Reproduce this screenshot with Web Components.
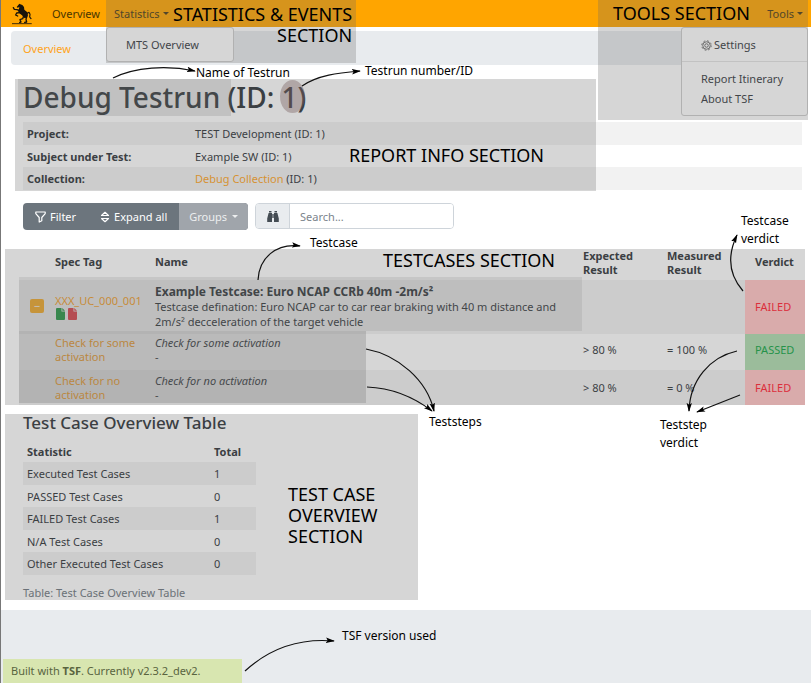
<!DOCTYPE html>
<html lang="en">
<head>
<meta charset="utf-8">
<title>Testrun report</title>
<style>
body{margin:0;background:#fff;color:#2b3035;font:11px/15px "Noto Sans","Open Sans",sans-serif}
</style>
</head>
<body>
<report-page></report-page>
<script>
const base = `*{box-sizing:border-box}
a{color:#ffa31a;text-decoration:none}
button{font:inherit;border:0;background:none;padding:0;color:inherit}
table{border-collapse:collapse;width:100%}
td,th{padding:0 4px;text-align:left}
.shade{position:absolute;background:rgba(104,104,104,.27);pointer-events:none}
.caret{display:inline-block;border:3px solid transparent;border-top:3px solid;border-bottom:0;margin-left:3px;vertical-align:3px}`;

function define(name, css, html) {
  const t = document.createElement('template');
  t.innerHTML = `<style>${base}${css}</style>${html}`;
  customElements.define(name, class extends HTMLElement {
    constructor() {
      super();
      this.attachShadow({mode: 'open'}).append(t.content.cloneNode(true));
    }
  });
}

define('nav-menu', `
:host{display:block;position:relative}
.menu{position:absolute;top:100%;left:0;background:#fff;border:1px solid #ccc;border-radius:3px;white-space:nowrap;z-index:2}
:host([side=end]) .menu{left:auto;right:0}
button{height:27px;padding:0 8px;color:#4a3a14;display:block}
:host([side=end]) button{padding-right:5px}
`, `<button aria-haspopup="true" aria-expanded="true"><slot name="label"></slot><span class="caret"></span></button><div class="menu"><slot></slot></div>`);

define('top-nav', `
:host{display:block;position:relative;z-index:3}
nav{display:flex;align-items:center;height:27px;background:#ffa500;padding:0 3px 0 11px}
.logo{display:block;width:20px;height:22px}
.home{color:#4a3500;margin:0 6px 0 20px}
nav-menu:last-of-type{margin-left:auto}
.item{display:block;color:#33383d;line-height:20px;padding:0 24px 0 19px}
.wide{padding-right:34px}
.pad{padding:7px 0 6px}
.line{border-top:1px solid #e4e4e4}
.gear{vertical-align:-2px;margin-right:2px}
.stat{left:105px;top:0;width:250px;height:63px;z-index:3}
.tool{right:3px;top:0;width:210px;height:120px;z-index:3}
`, `<nav>
<svg class="logo" viewBox="35 6 60 64" role="img" aria-label="Horse" fill="none" stroke="#17130a" stroke-linejoin="round" stroke-linecap="round"><path fill="#17130a" stroke="none" d="M57 7l3 2 6 2 5 6 1 8 9 8 2 9-3 7-8 1-7-8-8-6-4-7 3-7 1-5-5 2-3-2z"/><path stroke-width="4" d="M58 28l-8-3-8-1-3-5M59 34l-10 1-3 6 6 3M70 44l-3 8-8 3 3 7-4 1M79 46l-2 8 2 8-6 1"/><path stroke-width="3.500" d="M81 36l5-3 3 6-1 8 4 5"/><path stroke-width="2.500" d="M36 67h57"/></svg>
<a class="home" href="#">Overview</a>
<nav-menu><span slot="label">Statistics</span><div class="pad"><a class="item wide" href="#mts">MTS Overview</a></div></nav-menu>
<nav-menu side="end"><span slot="label">Tools</span><div class="pad"><a class="item" href="#settings"><svg class="gear" width="11" height="11" viewBox="0 0 22 22" fill="none" stroke="#444" stroke-width="1.5"><circle cx="11" cy="11" r="7.500"/><circle cx="11" cy="11" r="3.500"/><circle cx="11" cy="11" r="9.500" stroke-dasharray="3.730 3.730"/></svg>Settings</a></div><div class="pad line"><a class="item" href="#itinerary">Report Itinerary</a><a class="item" href="#about">About TSF</a></div></nav-menu>
</nav><div class="shade stat"></div><div class="shade tool"></div>`);

define('bread-crumb', `
:host{display:flex;align-items:center;height:34px;margin:4px 3px 0 10px;padding:0 12px;border-radius:4px;background:#e8ebee}
`, `<slot></slot>`);

define('report-info', `
:host{display:block;position:relative;margin:14px 9px 0 14px;padding:0 0 1px 8px}
h1{margin:0;font-size:28px;font-weight:500;line-height:36px;height:43px}
th{width:168px}
tr{height:23px}tr:nth-child(even){height:22px}
tr:nth-child(odd){background:#f2f2f2}
.all{inset:0 auto 0 0;width:581px}
.name{left:3px;top:0;width:213px;height:37px;background:rgba(104,104,104,.19)}
.id{left:265px;top:1px;width:25px;height:33px;border-radius:50%;background:rgba(120,95,95,.4)}
`, `<h1>Debug Testrun (ID: 1)</h1>
<table><tr><th scope="row">Project:</th><td>TEST Development (ID: 1)</td></tr>
<tr><th scope="row">Subject under Test:</th><td>Example SW (ID: 1)</td></tr>
<tr><th scope="row">Collection:</th><td><a href="#collection">Debug Collection</a> (ID: 1)</td></tr></table>
<div class="shade all"></div><div class="shade name"></div><div class="shade id"></div>`);

define('tool-bar', `
:host{display:flex;gap:7px;margin:12px 22px 0;height:27px}
.group{display:flex;border-radius:4px;overflow:hidden;background:#6c757d;color:#fff}
.group button{display:flex;align-items:center;gap:4px;padding:0 12px}
.group .off{background:#a0a5ab;color:#eceeef;padding:0 10px;gap:0}
.off .caret{margin-left:5px}
.search{display:flex;border:1px solid #ced4da;border-radius:4px;overflow:hidden;height:26px;width:199px}
label{display:grid;place-items:center;width:34px;background:#e9ecef;border-right:1px solid #ced4da}
input{flex:1;min-width:0;border:0;padding:0 10px;font:inherit;outline:0}
input::placeholder{color:#7b848c;opacity:1}
`, `<div class="group"><button><svg width="11" height="12" viewBox="0 0 11 12" fill="none" stroke="#fff" stroke-width="1.200" stroke-linejoin="round"><path d="M.8 1h9.400v1.600L6.800 6.500v3.200L4.200 11V6.500L.8 2.600z"/></svg>Filter</button>
<button><svg width="10" height="12" viewBox="0 0 10 12" fill="none" stroke="#fff" stroke-width="1.200" stroke-linejoin="round"><path d="M1.500 4.500L5 1.300l3.500 3.200zM1.500 7.500L5 10.700l3.500-3.200z"/></svg>Expand all</button>
<button class="off">Groups<span class="caret"></span></button></div>
<div class="search"><label for="q"><svg width="12" height="11" viewBox="0 0 12 11" fill="#444c53" role="img" aria-label="Search"><path d="M2 0h2.500v1.500H2zM7.500 0H10v1.500H7.500zM1.600 2H5v9H.2V7.500zM7 2h3.400L11.800 7.500V11H7zM5.300 3h1.400v4H5.300z"/></svg></label><input id="q" type="text" placeholder="Search..."></div>`);

const doc = c => `<svg width="9" height="12" viewBox="0 0 9 12"><path fill="${c}" d="M1 0h4.500v3.500H9V11a1 1 0 0 1-1 1H1a1 1 0 0 1-1-1V1a1 1 0 0 1 1-1z"/><path fill="${c}" d="M6.300 0L9 2.700H6.300z"/></svg>`;
define('test-cases', `
:host{display:block;position:relative;margin:19px 6px 0 4px;padding-left:14px}
table{table-layout:fixed}
.c0{width:32px}.c1{width:100px}.c3{width:84px}.c4{width:82px}.c5{width:60px}
thead tr{height:31px}
th{line-height:14px;padding-bottom:5px}
th.two-line{padding-bottom:0;vertical-align:top}
td{line-height:15px}
tbody tr:nth-child(odd){background:#f2f2f2}
.case{height:54px}.step{height:36px}.step+.step{height:35px}
.step td{line-height:14px}
.first td{padding-bottom:4px}
.step td:nth-child(2){padding-right:12px}
b{font-size:12px}
.v{position:relative;z-index:2;background:#d9abab;color:#dc2f3c;padding-left:10px}
thead th:last-child{padding-left:10px}
.v.ok{background:#9bbc9b;color:#25934a}
.case td:first-child{padding-left:11px}
.case td{padding-bottom:2px}
.fold{display:block;width:14px;height:14px;border-radius:2px;background:#ffae20;color:#fff;line-height:12px;text-align:center}
.docs{display:flex;gap:3px;padding-left:1px}
.case a{display:block}
.all{inset:0}
.one{left:14px;top:28px;right:223px;height:54px;background:rgba(104,104,104,.14)}
.two{left:14px;top:82px;width:347px;height:72px;background:rgba(104,104,104,.25)}
`, `<table><colgroup><col class="c0"><col class="c1"><col><col class="c3"><col class="c4"><col class="c5"></colgroup>
<thead><tr><th></th><th>Spec Tag</th><th>Name</th><th class="two-line">Expected Result</th><th class="two-line">Measured Result</th><th>Verdict</th></tr></thead>
<tbody><tr class="case"><td><button class="fold" aria-label="Collapse">−</button></td><td><a href="#uc">XXX_UC_000_001</a><div class="docs">${doc('#1f9a3f')}${doc('#e43c46')}</div></td><td><b>Example Testcase: Euro NCAP CCRb 40m -2m/s²</b><br>Testcase defination: Euro NCAP car to car rear braking with 40 m distance and 2m/s² decceleration of the target vehicle</td><td></td><td></td><td class="v">FAILED</td></tr>
<tr class="step first"><td></td><td><a href="#s1">Check for some activation</a></td><td><i>Check for some activation</i><br>-</td><td>&gt; 80 %</td><td>= 100 %</td><td class="v ok">PASSED</td></tr>
<tr class="step"><td></td><td><a href="#s2">Check for no activation</a></td><td><i>Check for no activation</i><br>-</td><td>&gt; 80 %</td><td>= 0 %</td><td class="v">FAILED</td></tr></tbody></table>
<div class="shade all"></div><div class="shade one"></div><div class="shade two"></div>`);

define('case-overview', `
:host{display:block;position:relative;margin:9px 4px 0;padding:0 18px;height:186px}
h2{margin:0;font-size:17px;font-weight:500;line-height:18px;padding-bottom:8px}
table{width:233px}
tr{height:23px}thead tr{height:22px}tbody tr:nth-child(even){height:22px}
tbody tr:nth-child(odd){background:#f2f2f2}
th:last-child,td:last-child{width:46px}
caption{caption-side:bottom;text-align:left;color:#6c757d;padding-top:10px}
.all{inset:0 auto 0 0;width:413px}
`, `<h2>Test Case Overview Table</h2>
<table><caption>Table: Test Case Overview Table</caption><thead><tr><th>Statistic</th><th>Total</th></tr></thead><tbody>
<tr><td>Executed Test Cases</td><td>1</td></tr><tr><td>PASSED Test Cases</td><td>0</td></tr><tr><td>FAILED Test Cases</td><td>1</td></tr><tr><td>N/A Test Cases</td><td>0</td></tr><tr><td>Other Executed Test Cases</td><td>0</td></tr></tbody></table>
<div class="shade all"></div>`);

define('page-footer', `
:host{display:flex;align-items:flex-end;flex:1;min-height:73px;margin-top:10px;background:#e8ebee;padding-left:2px}
p{margin:0;background:#d8e6b0;color:#59643f;line-height:24px;width:239px;padding:0 8px}
`, `<p>Built with <b>TSF</b>. Currently v2.3.2_dev2.</p>`);

/* A callout pinned at x/y on the annotation canvas. */
class NoteLabel extends HTMLElement {
  connectedCallback() {
    const big = this.hasAttribute('big');
    this.attachShadow({mode: 'open'}).innerHTML = `<style>:host{position:absolute;left:${this.getAttribute('x')}px;top:${this.getAttribute('y')}px;color:#000;white-space:nowrap;font-size:${big ? 18 : 12}px;line-height:${big ? 21 : 18}px}:host([end]){text-align:right}</style><slot></slot>`;
  }
}
customElements.define('note-label', NoteLabel);

define('note-layer', `
:host{position:absolute;inset:0 auto auto 0;z-index:5;pointer-events:none}
svg{display:block}
`, `<svg width="811" height="683" fill="none" stroke="#111" stroke-width="1.200"><defs><marker id="h" viewBox="0 0 10 6" refX="9" refY="3" markerWidth="9" markerHeight="6" markerUnits="userSpaceOnUse" orient="auto"><path d="M0 0L10 3 0 6 2 3z" fill="#000" stroke="none"/></marker></defs>
<g marker-end="url(#h)"><path d="M113 78C135 67 167 65 195 71"/><path d="M302 86C318 75 338 73 360 71"/><path d="M258 280C259 258 276 243 300 246"/><path d="M743 291C728 274 728 254 737 235"/><path d="M366 349C398 355 427 380 434 411"/><path d="M367 387C392 388 415 398 432 411"/><path d="M737 351C710 357 690 380 689 411"/><path d="M740 395L697 412"/><path d="M245 671C270 648 299 638 334 641"/></g></svg>
<note-label big end x="173" y="4">STATISTICS &amp; EVENTS<br>SECTION</note-label>
<note-label big x="613" y="3">TOOLS SECTION</note-label>
<note-label big x="349" y="145">REPORT INFO SECTION</note-label>
<note-label big x="383" y="250">TESTCASES SECTION</note-label>
<note-label big x="288" y="484">TEST CASE<br>OVERVIEW<br>SECTION</note-label>
<note-label x="196" y="64">Name of Testrun</note-label>
<note-label x="365" y="62">Testrun number/ID</note-label>
<note-label x="310" y="234">Testcase</note-label>
<note-label x="741" y="212">Testcase<br>verdict</note-label>
<note-label x="429" y="413">Teststeps</note-label>
<note-label x="660" y="416">Teststep<br>verdict</note-label>
<note-label x="342" y="627">TSF version used</note-label>`);

define('report-page', `
:host{display:flex;flex-direction:column;min-height:100vh;border-left:1px solid #777}
`, `<top-nav></top-nav><bread-crumb><a href="#overview">Overview</a></bread-crumb><report-info></report-info><tool-bar></tool-bar><test-cases></test-cases><case-overview></case-overview><page-footer></page-footer><note-layer></note-layer>`);
</script>
</body>
</html>
